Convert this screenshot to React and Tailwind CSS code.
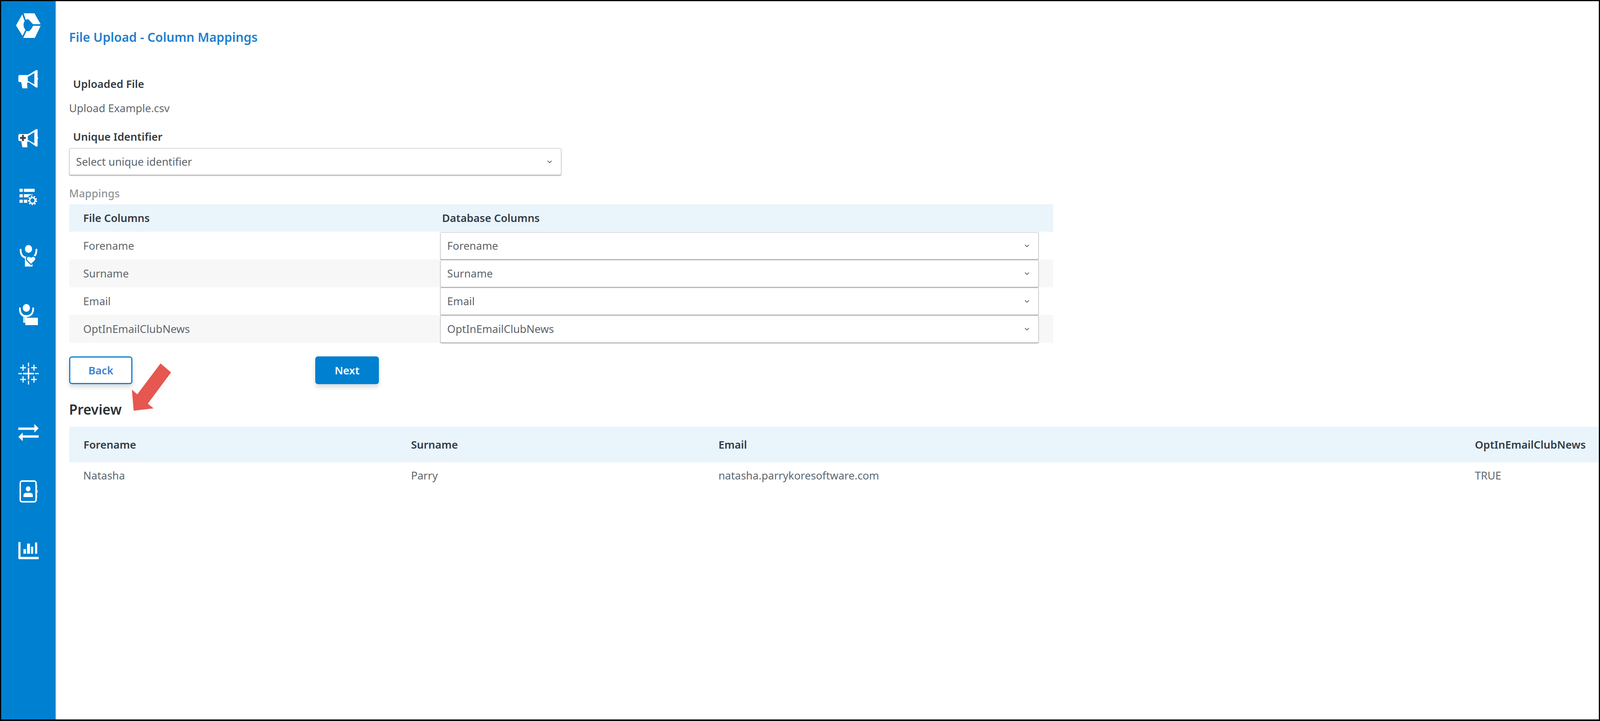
import React from "react";

const Logo = () => (
  <svg width="63" height="63" viewBox="0 0 68 63" preserveAspectRatio="none" fill="#fff">
    <path d="M21 0H51L68 28H47L35 16Q30 14 27 17Z" />
    <path d="M17 3L24 20Q20 25 21 32Q22 38 26 42L18 58L0 31Z" />
    <path d="M20 63L29 45Q33 47 37 45Q43 41 47 32H68L52 63Z" />
  </svg>
);

const Megaphone = ({ plus }) => (
  <svg width="52" height="48" viewBox="0 0 56 48" preserveAspectRatio="none" fill="#fff">
    <path
      fillRule="evenodd"
      d="M4 14H27L46 3Q50 0 53 2V20Q56 23 53 27V45Q50 48 46 44L29 33L24 34L25 48H11L8 32H4Q0 32 0 28V18Q0 14 4 14ZM26 19V29L44 38V9Z"
    />
    {plus && <path d="M10 16H15V21.5H20.5V26.5H15V32H10V26.5H4.500V21.500H10Z" fill="#3d4247" />}
  </svg>
);

const ListGear = () => (
  <svg width="46" height="42" viewBox="0 0 50 42" preserveAspectRatio="none" fill="#fff">
    <rect x="0" y="0" width="9" height="8" />
    <rect x="12" y="0" width="30" height="8" />
    <rect x="0" y="14" width="9" height="8" />
    <rect x="12" y="14" width="26" height="8" />
    <rect x="0" y="28" width="9" height="8" />
    <rect x="12" y="28" width="14" height="8" />
    <circle cx="36" cy="30" r="15" fill="#0080d0" />
    <circle cx="36" cy="30" r="7.500" fill="none" stroke="#fff" strokeWidth="3.500" />
    <circle cx="36" cy="30" r="11" fill="none" stroke="#fff" strokeWidth="3.500" strokeDasharray="4 3.860" />
  </svg>
);

const PersonHeart = () => (
  <svg width="46" height="55" viewBox="0 0 50 55" preserveAspectRatio="none" fill="#fff">
    <circle cx="25" cy="10" r="10" />
    <path d="M3 12C3 24 8 30 16 32H34C42 30 47 24 47 12" fill="none" stroke="#fff" strokeWidth="5" strokeLinecap="round" />
    <path d="M15 30H36V55H15Z" />
    <path d="M32 50L21 40C15 33 23 25 32 31C41 25 49 33 43 40Z" fill="#fff" stroke="#0080d0" strokeWidth="3" />
  </svg>
);

const PersonBox = () => (
  <svg width="48" height="56" viewBox="0 0 52 56" preserveAspectRatio="none" fill="#fff">
    <circle cx="20" cy="10" r="10" />
    <path d="M2 11C2 24 8 31 20 31C32 31 39 24 39 11" fill="none" stroke="#fff" strokeWidth="5" strokeLinecap="round" />
    <rect x="11" y="30" width="10" height="18" opacity="0.8" />
    <rect x="17" y="35" width="35" height="19" />
  </svg>
);

const Tableau = () => (
  <svg width="52" height="58" viewBox="0 0 56 58" preserveAspectRatio="none" fill="none" stroke="#fff">
    <path d="M28 14V44M13 29H43" strokeWidth="4" />
    <path d="M13 6V22M5 14H21M43 6V22M35 14H51M13 36V52M5 44H21M43 36V52M35 44H51" strokeWidth="3" />
    <path d="M28 1V11M28 47V57M0 29H10M46 29H56" strokeWidth="3" />
  </svg>
);

const Arrows = () => (
  <svg width="52" height="44" viewBox="0 0 56 44" preserveAspectRatio="none" fill="#fff">
    <path d="M0 9H44V0L56 11L44 22V15H0Z" />
    <path d="M56 29H12V22L0 33L12 44V35H56Z" />
  </svg>
);

const Contact = () => (
  <svg width="46" height="57" viewBox="0 0 50 57" preserveAspectRatio="none" fill="#fff">
    <rect x="2" y="2" width="44" height="53" rx="5" fill="none" stroke="#fff" strokeWidth="4" />
    <path d="M46 12H49V21H46ZM46 24H50V33H46ZM46 36H49V45H46Z" />
    <circle cx="24" cy="22" r="6.500" />
    <path d="M11 43V39Q11 32 19 32H29Q37 32 37 39V43Z" />
  </svg>
);

const Chart = () => (
  <svg width="52" height="44" viewBox="0 0 56 44" preserveAspectRatio="none" fill="#fff">
    <path d="M0 0H6V38H56V44H3Q0 44 0 41Z" />
    <rect x="14" y="18" width="7" height="12" />
    <rect x="24" y="4" width="8" height="26" />
    <rect x="35" y="12" width="6" height="18" />
    <rect x="46" y="1" width="6" height="29" />
  </svg>
);

const Chevron = () => (
  <svg width="12" height="8" viewBox="0 0 12 8" fill="none" stroke="#5b6167" strokeWidth="1.800">
    <path d="M1 1.500L6 6.500L11 1.500" />
  </svg>
);

const Select = ({ label, className }) => (
  <div
    className={`flex items-center justify-between bg-white border border-[#b4b4b4] rounded-[4px] shadow-[0_2px_2px_rgba(0,0,0,0.28)] pl-[0.41vw] pr-[0.545vw] text-[0.669vw] text-[#5c646b] ${className}`}
  >
    <span>{label}</span>
    <Chevron />
  </div>
);

const navIcons = [
  <Megaphone key="a" />,
  <Megaphone key="b" plus />,
  <ListGear key="c" />,
  <PersonHeart key="d" />,
  <PersonBox key="e" />,
  <Tableau key="f" />,
  <Arrows key="g" />,
  <Contact key="h" />,
  <Chart key="i" />,
];

const mappings = ["Forename", "Surname", "Email", "OptInEmailClubNews"];

export default function App() {
  return (
    <div
      className="relative flex w-screen h-screen bg-white border-[3px] border-b-[4px] border-black overflow-hidden"
      style={{ fontFamily: '"Noto Sans", "Open Sans", sans-serif' }}
    >
      <aside className="flex flex-col items-center w-[3.45vw] shrink-0 bg-[#0080d0] border-r-2 border-[#a5d4f2]">
        <div className="flex items-center justify-center w-full h-[124px]">
          <Logo />
        </div>
        {navIcons.map((icon, i) => (
          <div key={i} className="flex items-center justify-center w-full h-[150.800px]">
            {icon}
          </div>
        ))}
      </aside>

      <main className="flex-1 min-w-0 pl-[0.794vw] pt-[67px]">
        <h1 className="h-[50px] leading-[50px] text-[0.78vw] font-semibold text-[#1f7fcf]">
          File Upload - Column Mappings
        </h1>
        <div className="mt-[75px] pl-[0.25vw] h-[40px] leading-[40px] text-[0.669vw] font-semibold text-[#333b44]">
          Uploaded File
        </div>
        <div className="mt-[22px] h-[40px] leading-[40px] text-[0.669vw] text-[#5f676e]">Upload Example.csv</div>
        <div className="mt-[33px] pl-[0.25vw] h-[40px] leading-[40px] text-[0.669vw] font-semibold text-[#333b44]">
          Unique Identifier
        </div>
        <Select label="Select unique identifier" className="mt-[9px] w-[30.76vw] h-[69px]" />
        <div className="mt-[27px] h-[40px] leading-[40px] text-[0.669vw] font-medium text-[#8f9499]">Mappings</div>

        <div className="mt-[8px] w-[61.5vw]">
          <div className="grid grid-cols-[23.2vw_1fr] items-center h-[70px] bg-[#e9f4fb] text-[0.669vw] font-semibold text-[#333b44]">
            <div className="pl-[0.885vw]">File Columns</div>
            <div className="pl-[0.113vw]">Database Columns</div>
          </div>
          {mappings.map((m, i) => (
            <div
              key={m}
              className={`grid grid-cols-[23.2vw_37.39vw] items-center h-[71px] text-[0.669vw] text-[#5f676e] ${
                i % 2 ? "bg-[#f7f7f7]" : "bg-white"
              }`}
            >
              <div className="pl-[0.885vw]">{m}</div>
              <Select label={m} className="h-[70px]" />
            </div>
          ))}
        </div>

        <div className="flex mt-[35px] gap-[11.41vw]">
          <button className="w-[3.97vw] h-[71px] bg-white border-[3px] border-[#0a80d0] rounded-[7px] text-[0.669vw] font-semibold text-[#3a7fcb] shadow-[0_8px_12px_rgba(0,0,0,0.14)]">
            Back
          </button>
          <button className="w-[3.99vw] h-[71px] bg-[#0080d0] rounded-[7px] text-[0.669vw] font-semibold text-white shadow-[0_8px_12px_rgba(0,0,0,0.14)]">
            Next
          </button>
        </div>

        <h2 className="mt-[39px] h-[50px] leading-[50px] text-[0.862vw] font-semibold text-[#2d3339]">Preview</h2>

        <div className="mt-[20px]">
          <div className="grid grid-cols-[21.37vw_19.215vw_47.28vw_1fr] items-center h-[91px] bg-[#e9f4fb] text-[0.669vw] font-semibold text-[#333b44]">
            <div className="pl-[0.9vw]">Forename</div>
            <div>Surname</div>
            <div>Email</div>
            <div className="whitespace-nowrap">OptInEmailClubNews</div>
          </div>
          <div className="grid grid-cols-[21.37vw_19.215vw_47.28vw_1fr] items-center h-[68px] text-[0.669vw] text-[#5f676e]">
            <div className="pl-[0.885vw]">Natasha</div>
            <div>Parry</div>
            <div>natasha.parrykoresoftware.com</div>
            <div>TRUE</div>
          </div>
        </div>
      </main>

      <svg
        className="absolute left-0 top-0 w-[10.89vw] h-[1060px] pointer-events-none"
        viewBox="0 0 480 1060"
        preserveAspectRatio="none"
        fill="#e5574f"
      >
        <path d="M439 927L468 950L404 1030L420 1042L365 1048L360 994L375 1006Z" />
      </svg>
    </div>
  );
}
